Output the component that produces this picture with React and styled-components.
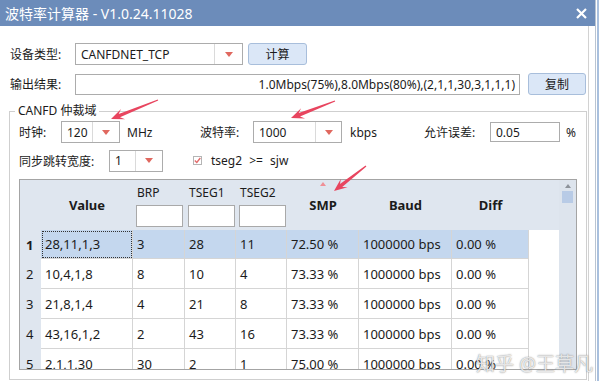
import React from 'react'
import styled, { createGlobalStyle } from 'styled-components'

const GlobalStyle = createGlobalStyle`
  html, body { margin: 0; padding: 0; background: #fff; overflow: hidden; }
  body {
    font-family: "Noto Sans", "Noto Sans CJK SC", sans-serif;
    font-size: 12px;
    color: #1b1b1b;
  }
  * { box-sizing: border-box; }
`

const Screen = styled.div`
  position: relative;
  display: flex;
  width: 599px;
  height: 381px;
  overflow: hidden;
`

const Window = styled.div`
  width: 596px;
  height: 381px;
  display: flex;
  flex-direction: column;
  background: #fff;
  border-right: 1px solid #b9c4d2;
`

const Desktop = styled.div`
  flex: 1;
  background: #a9c0de;
  border-left: 1px solid #fff;
`

const TitleBar = styled.div`
  height: 26px;
  flex: none;
  display: flex;
  align-items: center;
  justify-content: space-between;
  padding: 0 8px 0 5px;
  background: #6c8cba;
  color: #fff;
  font-size: 14px;
`

const Body = styled.div`
  flex: 1;
  padding: 17px 0 0 10px;
  margin-right: 6px;
  border-right: 1px solid #d2d2d2;
`

const Row = styled.div`
  display: flex;
  align-items: center;
  height: ${(p) => p.h || 22}px;
  margin-top: ${(p) => p.mt || 0}px;
`

const Label = styled.span`
  flex: none;
  width: ${(p) => p.w}px;
  margin-left: ${(p) => p.ml || 0}px;
  white-space: nowrap;
`

const CheckText = styled.span`
  word-spacing: 4px;
  white-space: nowrap;
`

const SelectBox = styled.div`
  flex: none;
  display: flex;
  width: ${(p) => p.w}px;
  height: ${(p) => p.h || 22}px;
  border: 1px solid #acacac;
  background: #fff;
`

const SelectValue = styled.div`
  flex: 1;
  display: flex;
  align-items: center;
  padding-left: 5px;
`

const SelectArrow = styled.div`
  flex: none;
  width: ${(p) => p.aw}px;
  display: flex;
  align-items: center;
  justify-content: center;
  border-left: 1px solid #dadada;
`

const Tri = styled.span`
  width: 0;
  height: 0;
  border-left: 4px solid transparent;
  border-right: 4px solid transparent;
  border-top: 5px solid #e0685f;
`

const Button = styled.button`
  flex: none;
  width: ${(p) => p.w}px;
  height: 22px;
  margin-left: ${(p) => p.ml}px;
  padding: 0;
  background: #dbe7f7;
  border: 1px solid #a8bedb;
  border-radius: 3px;
  font: inherit;
  color: #1b1b1b;
`

const TextBox = styled.div`
  flex: none;
  display: flex;
  align-items: center;
  justify-content: ${(p) => (p.right ? 'flex-end' : 'flex-start')};
  width: ${(p) => p.w}px;
  height: ${(p) => p.h || 21}px;
  padding: 0 4px 0 5px;
  border: 1px solid #acacac;
  background: #fff;
  white-space: nowrap;
`

const Group = styled.fieldset`
  width: 578px;
  margin: 8px 0 0 -1px;
  padding: 0;
  border: 1px solid #cfcfcf;
  min-width: 0;
`

const Legend = styled.legend`
  margin-left: 5px;
  padding: 0 3px;
  line-height: 16px;
`

const GroupInner = styled.div`
  padding: 2px 0 9px 9px;
`

const Check = styled.span`
  flex: none;
  display: flex;
  align-items: center;
  justify-content: center;
  width: 9px;
  height: 9px;
  margin: 0 9px 0 30px;
  border: 1px solid #b5b5b5;
  background: #fff;
`

const Table = styled.div`
  display: flex;
  width: 558px;
  height: 191px;
  margin-top: 8px;
  border: 1px solid #a4a4a4;
  overflow: hidden;
`

const Grid = styled.div`
  flex: 1;
  display: flex;
  flex-direction: column;
  overflow: hidden;
`

const COLS = '21px 92px 52px 51px 51px 72px 93px 77px 1fr'

const HeadRow = styled.div`
  flex: none;
  display: grid;
  grid-template-columns: ${COLS};
  height: 50px;
  background: #dfe6ef;
`

const HeadCell = styled.div`
  position: relative;
  display: flex;
  flex-direction: column;
  align-items: ${(p) => (p.stack ? 'flex-start' : 'center')};
  justify-content: ${(p) => (p.stack ? 'flex-start' : 'center')};
  padding: ${(p) => (p.stack ? '5px 0 0 3px' : '0')};
  font-weight: ${(p) => (p.stack ? 'normal' : 'bold')};
  font-size: ${(p) => (p.stack ? 12 : 13)}px;
`

const HeadLabel = styled.span`
  line-height: 16px;
  padding-left: 1px;
`

const FilterBox = styled.div`
  width: 47px;
  height: 22px;
  margin-top: 4px;
  background: #fff;
  border: 1px solid #a9a9a9;
`

const SortMark = styled.span`
  position: absolute;
  top: 2px;
  left: 50%;
  margin-left: -3px;
  width: 0;
  height: 0;
  border-left: 3px solid transparent;
  border-right: 3px solid transparent;
  border-bottom: 4px solid #ef8f96;
`

const BodyRow = styled.div`
  flex: none;
  display: grid;
  grid-template-columns: ${COLS};
  height: ${(p) => p.h || 30}px;
`

const RowNum = styled.div`
  display: flex;
  align-items: center;
  padding-left: 6px;
  background: #dfe6ef;
  font-weight: ${(p) => (p.bold ? 'bold' : 'normal')};
  font-size: 13px;
`

const Cell = styled.div`
  display: flex;
  align-items: center;
  padding-left: 4px;
  border-right: 1px solid #d5d5d5;
  border-bottom: 1px solid #d5d5d5;
  background: ${(p) => (p.sel ? '#c4d7ee' : '#fff')};
  outline: ${(p) => (p.focus ? '1px dotted #333' : 'none')};
  outline-offset: -2px;
  font-size: 13px;
  white-space: nowrap;
`

const Filler = styled.div`
  background: #fff;
`

const ScrollBar = styled.div`
  flex: none;
  width: 17px;
  display: flex;
  flex-direction: column;
  align-items: center;
  padding-top: 4px;
  background: #dde4ed;
`

const UpArrow = styled.span`
  width: 0;
  height: 0;
  border-left: 3px solid transparent;
  border-right: 3px solid transparent;
  border-bottom: 4px solid #8d939b;
`

const Thumb = styled.div`
  width: 11px;
  height: 12px;
  margin-top: 3px;
  background: #b8cbe6;
`

const Overlay = styled.svg`
  position: absolute;
  left: 0;
  top: 0;
  pointer-events: none;
`

const Watermark = styled.div`
  position: absolute;
  left: 476px;
  top: 349px;
  font-size: 19px;
  color: rgba(255, 255, 255, 0.8);
  text-shadow: 0 0 1px rgba(80, 80, 80, 0.6), 0 0 2px rgba(80, 80, 80, 0.3);
  white-space: nowrap;
`

const rows = [
  ['28,11,1,3', '3', '28', '11', '72.50 %', '1000000 bps', '0.00 %'],
  ['10,4,1,8', '8', '10', '4', '73.33 %', '1000000 bps', '0.00 %'],
  ['21,8,1,4', '4', '21', '8', '73.33 %', '1000000 bps', '0.00 %'],
  ['43,16,1,2', '2', '43', '16', '73.33 %', '1000000 bps', '0.00 %'],
  ['2,1,1,30', '30', '2', '1', '75.00 %', '1000000 bps', '0.00 %'],
]

function arrowPoints(tx, ty, hx, hy) {
  const len = Math.hypot(hx - tx, hy - ty)
  const dx = (hx - tx) / len
  const dy = (hy - ty) / len
  const nx = -dy
  const ny = dx
  const at = (back, side) => [hx - dx * back + nx * side, hy - dy * back + ny * side]
  const pts = [
    [tx + nx * 0.6, ty + ny * 0.6],
    at(9, 1.8),
    at(13, 5.5),
    [hx, hy],
    at(13, -5.5),
    at(9, -1.8),
    [tx - nx * 0.6, ty - ny * 0.6],
  ]
  return pts.map((p) => p.map((v) => v.toFixed(1)).join(',')).join(' ')
}

function Select({ w, aw, value }) {
  return (
    <SelectBox w={w}>
      <SelectValue>{value}</SelectValue>
      <SelectArrow aw={aw}>
        <Tri />
      </SelectArrow>
    </SelectBox>
  )
}

export default function App() {
  return (
    <Screen>
      <GlobalStyle />
      <Window>
        <TitleBar>
          <span>波特率计算器 - V1.0.24.11028</span>
          <svg width="11" height="11" viewBox="0 0 11 11">
            <path d="M1 1L10 10M10 1L1 10" stroke="#fff" strokeWidth="2.2" />
          </svg>
        </TitleBar>
        <Body>
          <Row>
            <Label w={65}>设备类型:</Label>
            <Select w={168} aw={28} value="CANFDNET_TCP" />
            <Button w={59} ml={5}>计算</Button>
          </Row>
          <Row mt={8}>
            <Label w={65}>输出结果:</Label>
            <TextBox w={445} right>1.0Mbps(75%),8.0Mbps(80%),(2,1,1,30,3,1,1,1)</TextBox>
            <Button w={58} ml={8}>复制</Button>
          </Row>
          <Group>
            <Legend>CANFD 仲裁域</Legend>
            <GroupInner>
              <Row>
                <Label w={42}>时钟:</Label>
                <Select w={59} aw={27} value="120" />
                <Label w={73} ml={7}>MHz</Label>
                <Label w={53}>波特率:</Label>
                <Select w={89} aw={26} value="1000" />
                <Label w={74} ml={8}>kbps</Label>
                <Label w={66}>允许误差:</Label>
                <TextBox w={70} h={20}>0.05</TextBox>
                <Label w={12} ml={6}>%</Label>
              </Row>
              <Row mt={7} h={21}>
                <Label w={90}>同步跳转宽度:</Label>
                <Select w={54} aw={27} value="1" />
                <Check>
                  <svg width="7" height="7" viewBox="0 0 7 7">
                    <path d="M0.8 3.4L2.8 5.4L6.3 1" stroke="#e26b6b" strokeWidth="1.4" fill="none" />
                  </svg>
                </Check>
                <CheckText>tseg2 &gt;= sjw</CheckText>
              </Row>
              <Table>
                <Grid>
                  <HeadRow>
                    <div />
                    <HeadCell>Value</HeadCell>
                    <HeadCell stack>
                      <HeadLabel>BRP</HeadLabel>
                      <FilterBox />
                    </HeadCell>
                    <HeadCell stack>
                      <HeadLabel>TSEG1</HeadLabel>
                      <FilterBox />
                    </HeadCell>
                    <HeadCell stack>
                      <HeadLabel>TSEG2</HeadLabel>
                      <FilterBox />
                    </HeadCell>
                    <HeadCell>
                      <SortMark />
                      SMP
                    </HeadCell>
                    <HeadCell>Baud</HeadCell>
                    <HeadCell>Diff</HeadCell>
                    <div />
                  </HeadRow>
                  {rows.map((r, i) => (
                    <BodyRow key={i} h={i === 0 ? 29 : 30}>
                      <RowNum bold={i === 0}>{i + 1}</RowNum>
                      {r.map((v, j) => (
                        <Cell key={j} sel={i === 0} focus={i === 0 && j === 0}>
                          {v}
                        </Cell>
                      ))}
                      <Filler />
                    </BodyRow>
                  ))}
                </Grid>
                <ScrollBar>
                  <UpArrow />
                  <Thumb />
                </ScrollBar>
              </Table>
            </GroupInner>
          </Group>
        </Body>
      </Window>
      <Desktop />
      <Overlay width="599" height="381">
        <polygon points={arrowPoints(158, 100, 111, 119)} fill="#e8455f" />
        <polygon points={arrowPoints(335, 101, 291, 118)} fill="#e8455f" />
        <polygon points={arrowPoints(366, 166, 334, 191)} fill="#e8455f" />
      </Overlay>
      <Watermark>知乎 @王草凡</Watermark>
    </Screen>
  )
}
